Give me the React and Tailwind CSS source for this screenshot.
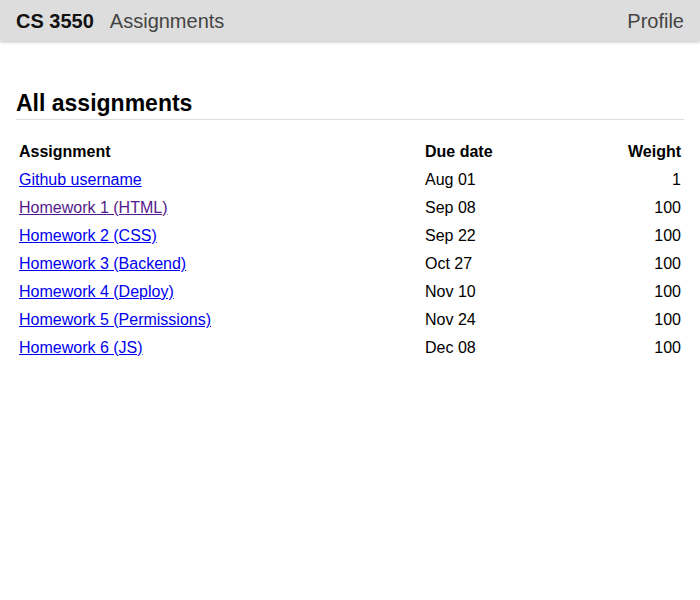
import React from 'react';

const ASSIGNMENTS = [
  { title: 'Github username', due: 'Aug 01', weight: 1 },
  { title: 'Homework 1 (HTML)', due: 'Sep 08', weight: 100, visited: true },
  { title: 'Homework 2 (CSS)', due: 'Sep 22', weight: 100 },
  { title: 'Homework 3 (Backend)', due: 'Oct 27', weight: 100 },
  { title: 'Homework 4 (Deploy)', due: 'Nov 10', weight: 100 },
  { title: 'Homework 5 (Permissions)', due: 'Nov 24', weight: 100 },
  { title: 'Homework 6 (JS)', due: 'Dec 08', weight: 100 },
];

const App = () => {
  return (
    <div className="min-h-[600px] bg-white text-black font-['Liberation_Sans',Arial,sans-serif]">
      {/* Top bar */}
      <header className="h-[41px] flex items-center px-4 bg-[#dddddd] shadow-[0_1px_3px_rgba(0,0,0,0.25)]">
        <span className="text-[20px] font-bold text-[#111]">CS 3550</span>
        <span className="ml-4 text-[20px] text-[#444]">Assignments</span>
        <span className="ml-auto text-[20px] text-[#444]">Profile</span>
      </header>

      <main className="px-4 pt-[48px]">
        <h1 className="text-[23px] font-bold leading-[29px] pb-[1px] border-b border-[#dddddd]">All assignments</h1>

        <table className="w-full mt-[18px] text-[16px] border-collapse">
          <thead>
            <tr className="h-[28px]">
              <th className="w-[406px] px-[3px] text-left font-bold">Assignment</th>
              <th className="px-[3px] text-left font-bold">Due date</th>
              <th className="px-[3px] text-right font-bold">Weight</th>
            </tr>
          </thead>
          <tbody>
            {ASSIGNMENTS.map((a, idx) => (
              <tr key={idx} className="h-[28px]">
                <td className="px-[3px]">
                  <a href="#" className={`underline ${a.visited ? 'text-[#551a8b]' : 'text-[#0000ee]'}`}>{a.title}</a>
                </td>
                <td className="px-[3px]">{a.due}</td>
                <td className="px-[3px] text-right">{a.weight}</td>
              </tr>
            ))}
          </tbody>
        </table>
      </main>
    </div>
  );
};

export default App;
